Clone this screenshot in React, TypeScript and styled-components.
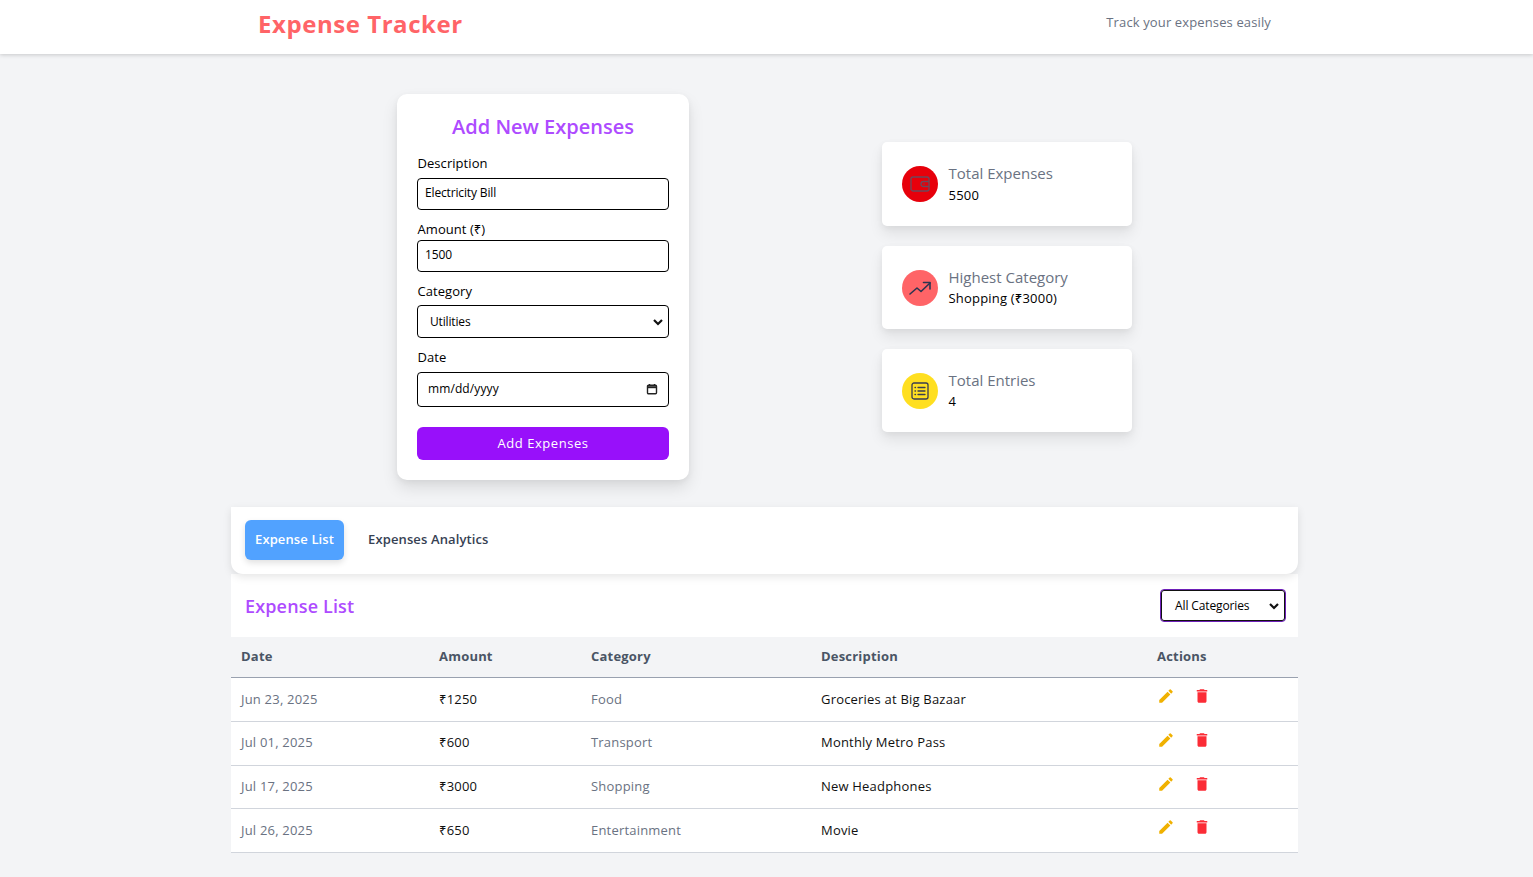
import React from "react";
import styled, { createGlobalStyle } from "styled-components";
import { MdEdit, MdDelete } from "react-icons/md";

const FONT = `"Open Sans", "Noto Sans", sans-serif`;

const Global = createGlobalStyle`
  html, body { margin: 0; padding: 0; background: #f3f4f6; }
  body { font-family: ${FONT}; color: #000; height: 877px; overflow: hidden; }
  * { box-sizing: border-box; }
`;

const Header = styled.header`
  height: 54px; background: #fff; box-shadow: 0 1px 4px rgba(0,0,0,.18);
  display: flex; justify-content: space-between; padding: 0 262px 0 258px;
`;
const Brand = styled.h1`
  margin: 6px 0 0; font-size: 24px; line-height: 36px; font-weight: 700; color: #ff6467; letter-spacing: .55px;
`;
const Tagline = styled.p`
  margin: 12px 0 0; font-size: 13px; line-height: 20px; color: #6a7282; letter-spacing: .13px;
`;
const Main = styled.main`
  width: 1067px; margin-left: 231px; padding-top: 40px;
`;
const Top = styled.section`
  display: flex; justify-content: center; align-items: center; gap: 193px;
`;
const FormCard = styled.form`
  width: 292px; height: 386px; background: #fff; border-radius: 10px;
  padding: 19px 20px 20px; box-shadow: 0 8px 16px rgba(0,0,0,.1), 0 2px 6px rgba(0,0,0,.05);
`;
const FormTitle = styled.h2`
  margin: 0 0 14px; text-align: center; color: #ae4bff; font-size: 20px; line-height: 27px; font-weight: 600;
`;
const Field = styled.div<{ $mb: number }>`
  margin-bottom: ${p => p.$mb}px;
`;
const Label = styled.label<{ $mb: number }>`
  display: block; font-size: 13px; line-height: 19px; margin-bottom: ${p => p.$mb}px; padding-left: .5px; letter-spacing: .06px;
`;
const Control = styled.div<{ $h: number; $pl: number; $pr?: number; $pb?: number; $ls?: number }>`
  height: ${p => p.$h}px; border: 1px solid #000; border-radius: 4px; background: #fff;
  display: flex; align-items: center; justify-content: space-between;
  padding: 0 ${p => p.$pr ?? 8}px ${p => p.$pb ?? 0}px ${p => p.$pl}px; font-size: 12px; letter-spacing: ${p => p.$ls ?? -.15}px;
`;
const Submit = styled.button`
  display: block; width: 100%; height: 33px; border: 0; border-radius: 6px; background: #9810fa; padding: 0 0 1px;
  color: #fff; font: 400 13px ${FONT}; letter-spacing: .55px; margin-top: 20px;
`;
const Stats = styled.div`
  width: 250px; display: flex; flex-direction: column; gap: 20px;
`;
const StatCard = styled.div<{ $h: number }>`
  height: ${p => p.$h}px; background: #fff; border-radius: 5px; padding: 0 20px;
  display: flex; align-items: center; gap: 10.5px;
  box-shadow: 0 8px 14px rgba(0,0,0,.08), 0 2px 6px rgba(0,0,0,.05);
`;
const Circle = styled.div<{ $bg: string }>`
  width: 36px; height: 36px; border-radius: 50%; background: ${p => p.$bg};
  display: flex; align-items: center; justify-content: center; flex: none;
`;
const StatText = styled.div<{ $pb: number }>`
  padding-bottom: ${p => p.$pb}px;
`;
const StatLabel = styled.div`
  font-size: 15px; line-height: 20px; color: #6a7282;
`;
const StatValue = styled.div<{ $mt: number }>`
  font-size: 13px; line-height: 18px; margin-top: ${p => p.$mt}px; letter-spacing: .2px; font-weight: 500;
`;
const Tabs = styled.nav`
  height: 67px; margin-top: 27px; background: #fff; border-radius: 0 0 12px 12px;
  box-shadow: 0 3px 8px rgba(0,0,0,.1); padding: 13px 14px; display: flex; align-items: flex-start; position: relative;
`;
const Tab = styled.button<{ $active?: boolean }>`
  height: 40px; border: 0; border-radius: 6px; padding: 0 ${p => p.$active ? 10 : 24}px 2px;
  background: ${p => p.$active ? "#51a2ff" : "transparent"}; color: ${p => p.$active ? "#fff" : "#364153"};
  font: 600 13px ${FONT}; letter-spacing: .12px;
  box-shadow: ${p => p.$active ? "0 3px 6px rgba(0,0,0,.12)" : "none"};
`;
const ListHead = styled.div`
  height: 63px; background: #fff; padding: 15px 12.5px 0 14px; display: flex; justify-content: space-between; align-items: flex-start;
`;
const ListTitle = styled.h2`
  margin: 4px 0 0; color: #ae4bff; font-size: 18px; line-height: 27px; font-weight: 600; letter-spacing: .15px;
`;
const Filter = styled.div`
  width: 125.500px; height: 33px; border: 1px solid #6d1fb8; box-shadow: inset 0 0 0 1px #111; border-radius: 4px; background: #fff;
  display: flex; align-items: center; justify-content: space-between; padding: 0 5px 0 14px; font-size: 12px; letter-spacing: -.12px;
`;
const Table = styled.table`
  width: 100%; border-collapse: collapse; table-layout: fixed;
`;
const Th = styled.th<{ $w: number }>`
  width: ${p => p.$w}px; height: 40px; padding: 0 10px 2px; text-align: left; font-size: 13px; font-weight: 700; color: #4a5565;
  letter-spacing: .2px; background: #f3f4f6; border-bottom: 1px solid #99a1af;
`;
const Tr = styled.tr`
  background: #fff; border-bottom: 1px solid #d1d5dc;
  &:nth-child(3) td { height: 43px; }
  &:nth-child(2) td, &:nth-child(3) td { padding-bottom: 2px; }
`;
const Td = styled.td<{ $muted?: boolean }>`
  height: 44px; padding: 0 10px; font-size: 13px; letter-spacing: .2px; color: ${p => p.$muted ? "#6a7282" : "#101010"};
`;
const Actions = styled.div`
  display: flex; align-items: center; gap: 18px; padding: 0 0 7px; color: #f0b100;
  tr:nth-child(2) & { padding-bottom: 5px; }
  tr:nth-child(3) & { padding-bottom: 3px; }
  & svg:last-child { color: #fb2c36; }
`;

const Chevron = () => (
  <svg width="12" height="12" viewBox="0 0 12 12" fill="none" stroke="#111" strokeWidth="2.2"><path d="M2 4l4 4 4-4" /></svg>
);
const Wallet = () => (
  <svg width="22" height="20" viewBox="0 0 22 20" fill="none" stroke="#6a4a5e" strokeWidth="1.3">
    <rect x="2" y="3" width="18" height="14" rx="2" />
    <path d="M20 7.500h-5.500a2.500 2.500 0 0 0 0 5H20M14.500 10h1" />
  </svg>
);
const Trend = () => (
  <svg width="24" height="24" viewBox="0 0 24 24" fill="none" stroke="#2b3550" strokeWidth="1.6" strokeLinecap="round" strokeLinejoin="round">
    <path d="M2 18l7-6 4 3.500L22 7" /><path d="M15.500 6.500H22V13" />
  </svg>
);
const Entries = () => (
  <svg width="20" height="20" viewBox="0 0 20 20" fill="none" stroke="#3a3d50" strokeWidth="1.3" strokeLinecap="round">
    <rect x="2" y="2" width="16" height="16" rx="2" />
    <path d="M8 6.500h7M8 10h7M8 13.500h7" /><path d="M5 6.500h.5M5 10h.5M5 13.500h.5" />
  </svg>
);
const CalendarIcon = () => (
  <svg width="12" height="12" viewBox="0 0 12 12" fill="none" stroke="#222" strokeWidth="1.4">
    <rect x="1.500" y="2.200" width="9" height="8.500" rx="1" /><path d="M1.500 4.200h9" strokeWidth="2" /><path d="M3.500 1v1.500M8.500 1v1.500" />
  </svg>
);

const rows = [
  ["Jun 23, 2025", "₹1250", "Food", "Groceries at Big Bazaar"],
  ["Jul 01, 2025", "₹600", "Transport", "Monthly Metro Pass"],
  ["Jul 17, 2025", "₹3000", "Shopping", "New Headphones"],
  ["Jul 26, 2025", "₹650", "Entertainment", "Movie"],
];

export default function App() {
  return (
    <>
      <Global />
      <Header>
        <Brand>Expense Tracker</Brand>
        <Tagline>Track your expenses easily</Tagline>
      </Header>
      <Main>
        <Top>
          <FormCard>
            <FormTitle>Add New Expenses</FormTitle>
            <Field $mb={10}>
              <Label $mb={5}>Description</Label>
              <Control $h={32} $pl={7} $pb={3}>Electricity Bill</Control>
            </Field>
            <Field $mb={10}>
              <Label $mb={1}>Amount (₹)</Label>
              <Control $h={32} $pl={7} $pb={3}>1500</Control>
            </Field>
            <Field $mb={10}>
              <Label $mb={4}>Category</Label>
              <Control $h={33} $pl={12} $pr={4}>Utilities<Chevron /></Control>
            </Field>
            <Field $mb={0}>
              <Label $mb={5}>Date</Label>
              <Control $h={35} $pl={10} $pr={10} $pb={2} $ls={.1}>mm/dd/yyyy<CalendarIcon /></Control>
            </Field>
            <Submit type="button">Add Expenses</Submit>
          </FormCard>
          <Stats>
            <StatCard $h={84}>
              <Circle $bg="#e7000b"><Wallet /></Circle>
              <StatText $pb={1}><StatLabel>Total Expenses</StatLabel><StatValue $mt={3}>5500</StatValue></StatText>
            </StatCard>
            <StatCard $h={83}>
              <Circle $bg="#ff6467"><Trend /></Circle>
              <StatText $pb={1}><StatLabel>Highest Category</StatLabel><StatValue $mt={2}>Shopping (₹3000)</StatValue></StatText>
            </StatCard>
            <StatCard $h={83}>
              <Circle $bg="#ffdf20"><Entries /></Circle>
              <StatText $pb={1}><StatLabel>Total Entries</StatLabel><StatValue $mt={2}>4</StatValue></StatText>
            </StatCard>
          </Stats>
        </Top>
        <Tabs>
          <Tab $active type="button">Expense List</Tab>
          <Tab type="button">Expenses Analytics</Tab>
        </Tabs>
        <ListHead>
          <ListTitle>Expense List</ListTitle>
          <Filter>All Categories<Chevron /></Filter>
        </ListHead>
        <Table>
          <thead>
            <tr>
              <Th $w={198}>Date</Th><Th $w={152}>Amount</Th><Th $w={230}>Category</Th><Th $w={336}>Description</Th><Th $w={151}>Actions</Th>
            </tr>
          </thead>
          <tbody>
            {rows.map(r => (
              <Tr key={r[0]}>
                <Td $muted>{r[0]}</Td>
                <Td>{r[1]}</Td>
                <Td $muted>{r[2]}</Td>
                <Td>{r[3]}</Td>
                <Td><Actions><MdEdit size={18} /><MdDelete size={18} /></Actions></Td>
              </Tr>
            ))}
          </tbody>
        </Table>
      </Main>
    </>
  );
}
